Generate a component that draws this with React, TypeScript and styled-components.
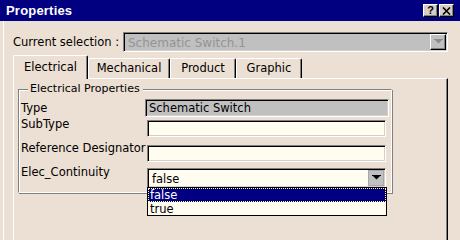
import React from "react";
import styled, { createGlobalStyle } from "styled-components";

const GlobalStyle = createGlobalStyle`
  html, body {
    margin:0;
    padding:0;
    background:#ecdfd3;
    overflow:hidden;
  }
  body {
    font-family: "DejaVu Sans", Verdana, sans-serif;
    font-size: 11px;
    color:#000;
  }
`;

const Window = styled.div`
  position:relative;
  width:460px;
  height:240px;
  background:#ecdfd3;
  display:flex;
  flex-direction:column;
  overflow:hidden;
`;

const TitleBar = styled.div`
  height:21px;
  flex:none;
  background:#000080;
  display:flex;
  align-items:center;
  padding:0 6px 0 6px;
  gap:1px;
`;

const Title = styled.div`
  flex:1;
  color:#fff;
  font: bold 13px "Liberation Sans", Arial, sans-serif;
  letter-spacing:0.2px;
`;

const TitleButton = styled.div`
  width:13px;
  height:11px;
  background:#d6cec6;
  border-top:1px solid #fff;
  border-left:1px solid #fff;
  border-right:1px solid #000;
  border-bottom:1px solid #000;
  box-shadow: inset -1px -1px 0 #808080;
  display:flex;
  align-items:center;
  justify-content:center;
  font: bold 11px "Liberation Sans", Arial, sans-serif;
  line-height:11px;
`;

const Body = styled.div`
  flex:1;
  margin-left:3px;
  border-left:1px solid #fff;
  padding:11px 0 0 9px;
  display:flex;
  flex-direction:column;
`;

const SelectionRow = styled.div`
  display:flex;
  align-items:center;
  height:20px;
`;

const SelectionLabel = styled.div`
  width:110px;
  font-size:11.5px;
  white-space:nowrap;
`;

const Combo = styled.div<{ $width: number; $bg: string }>`
  position:relative;
  box-sizing:border-box;
  width:${p => p.$width}px;
  height:20px;
  background:${p => p.$bg};
  border-top:1px solid #808080;
  border-left:1px solid #808080;
  border-right:1px solid #fff;
  border-bottom:1px solid #fff;
  box-shadow: inset 1px 1px 0 #000, inset -1px -1px 0 #d4d0c8;
  display:flex;
  align-items:center;
  padding:0 1px 0 4px;
`;

const ComboText = styled.div<{ $disabled?: boolean }>`
  flex:1;
  color:${p => (p.$disabled ? "#949494" : "#000")};
  white-space:nowrap;
  font-size:${p => (p.$disabled ? "12px" : "11.5px")};
  padding-top:1px;
`;

const ArrowButton = styled.div<{ $flat?: boolean }>`
  box-sizing:border-box;
  width:16px;
  height:16px;
  background:#c0c0c0;
  display:flex;
  align-items:center;
  justify-content:center;
  ${p =>
    p.$flat
      ? `border:1px solid #a8a8a8;`
      : `border-top:1px solid #fff; border-left:1px solid #fff; border-right:1px solid #000; border-bottom:1px solid #000; box-shadow: inset -1px -1px 0 #808080;`}
`;

const Tabs = styled.div`
  display:flex;
  align-items:flex-end;
  margin-top:3px;
  height:23px;
  position:relative;
  z-index:1;
`;

const Tab = styled.div<{ $active?: boolean; $width: number }>`
  box-sizing:border-box;
  width:${p => p.$width}px;
  height:${p => (p.$active ? 24 : 20)}px;
  margin-bottom:${p => (p.$active ? -1 : 0)}px;
  background:#ecdfd3;
  border-top:1px solid #fff;
  border-left:1px solid #fff;
  border-right:1px solid #000;
  border-top-left-radius:2px;
  border-top-right-radius:2px;
  box-shadow: inset -1px 0 0 #808080;
  display:flex;
  justify-content:center;
  padding-top:${p => (p.$active ? 4 : 2)}px;
  font-size:11.5px;
  white-space:nowrap;
`;

const Panel = styled.div`
  box-sizing:border-box;
  width:435px;
  flex:1;
  border-top:1px solid #fff;
  border-left:1px solid #fff;
  border-right:1px solid #000;
  box-shadow: inset -1px 0 0 #808080;
  padding:10px 0 0 4px;
`;

const GroupBox = styled.div`
  position:relative;
  box-sizing:border-box;
  width:374px;
  height:104px;
  border-top:1px solid #808080;
  border-left:1px solid #808080;
  border-right:1px solid #fff;
  border-bottom:1px solid #fff;
  box-shadow: inset 1px 1px 0 #fff, 1px 1px 0 #808080;
  padding:0 0 0 2px;
`;

const Legend = styled.div`
  position:absolute;
  left:9px;
  top:-8px;
  padding:0 3px 0 2px;
  background:#ecdfd3;
  font-size:11px;
  line-height:14px;
`;

const Row = styled.div<{ $gap: number }>`
  display:flex;
  align-items:flex-start;
  margin-top:${p => p.$gap}px;
  position:relative;
`;

const Label = styled.div<{ $offset: number }>`
  width:124px;
  height:13px;
  line-height:13px;
  font-size:11.5px;
  margin-top:${p => p.$offset}px;
  margin-bottom:${p => -p.$offset}px;
  white-space:nowrap;
`;

const Field = styled.div<{ $bg: string; $width: number; $left: number; $height?: number }>`
  box-sizing:border-box;
  width:${p => p.$width}px;
  height:${p => p.$height ?? 17}px;
  margin-left:${p => p.$left}px;
  background:${p => p.$bg};
  border-top:1px solid #808080;
  border-left:1px solid #808080;
  border-right:1px solid #fff;
  border-bottom:1px solid #fff;
  box-shadow: inset 1px 1px 0 #000, inset -1px -1px 0 #d4d0c8;
  padding:1px 0 0 3px;
  font-size:11.5px;
  line-height:14px;
  white-space:nowrap;
`;

const DropList = styled.div`
  position:absolute;
  left:126px;
  top:19px;
  box-sizing:border-box;
  width:240px;
  height:29px;
  background:#fffcf0;
  border:1px solid #000;
  z-index:2;
`;

const Option = styled.div<{ $selected?: boolean }>`
  height:14px;
  line-height:14px;
  padding-left:2px;
  font-size:11.5px;
  background:${p => (p.$selected ? "#000080" : "transparent")};
  color:${p => (p.$selected ? "#fff" : "#000")};
  outline:${p => (p.$selected ? "1px dotted #ffff9a" : "none")};
  outline-offset:-1px;
`;

const DownArrow: React.FC<{ color: string }> = ({ color }) => (
  <svg width="9" height="6" viewBox="0 0 9 6">
    <rect x="0" y="0" width="9" height="1" fill={color} />
    <path d="M1 1h7L4.5 4.5z" fill={color} />
  </svg>
);

const CloseGlyph = () => (
  <svg width="9" height="8" viewBox="0 0 9 8">
    <path d="M1 0.5l7 7M8 0.5l-7 7" stroke="#000" strokeWidth="1.6" />
  </svg>
);

const App: React.FC = () => {
  return (
    <Window>
      <GlobalStyle />
      <TitleBar>
        <Title>Properties</Title>
        <TitleButton>?</TitleButton>
        <TitleButton><CloseGlyph /></TitleButton>
      </TitleBar>
      <Body>
        <SelectionRow>
          <SelectionLabel>Current selection :</SelectionLabel>
          <Combo $width={325} $bg="#c0c0c0">
            <ComboText $disabled>Schematic Switch.1</ComboText>
            <ArrowButton><DownArrow color="#8c8c8c" /></ArrowButton>
          </Combo>
        </SelectionRow>
        <Tabs>
          <Tab $active $width={75}>Electrical</Tab>
          <Tab $width={82}>Mechanical</Tab>
          <Tab $width={66}>Product</Tab>
          <Tab $width={66}>Graphic</Tab>
        </Tabs>
        <Panel>
          <GroupBox>
            <Legend>Electrical Properties</Legend>
            <Row $gap={9}>
              <Label $offset={3}>Type</Label>
              <Field $bg="#c0c0c0" $width={244} $left={0} $height={18}>Schematic Switch</Field>
            </Row>
            <Row $gap={3}>
              <Label $offset={-2}>SubType</Label>
              <Field $bg="#fffcf0" $width={239} $left={2} />
            </Row>
            <Row $gap={8}>
              <Label $offset={-3}>Reference Designator</Label>
              <Field $bg="#fffcf0" $width={239} $left={2} />
            </Row>
            <Row $gap={6}>
              <Label $offset={-2}>Elec_Continuity</Label>
              <div style={{ marginLeft: 2 }}>
                <Combo $width={239} $bg="#fffcf0">
                  <ComboText>false</ComboText>
                  <ArrowButton $flat><DownArrow color="#000" /></ArrowButton>
                </Combo>
              </div>
              <DropList>
                <Option $selected>false</Option>
                <Option>true</Option>
              </DropList>
            </Row>
          </GroupBox>
        </Panel>
      </Body>
    </Window>
  );
};

export default App;
